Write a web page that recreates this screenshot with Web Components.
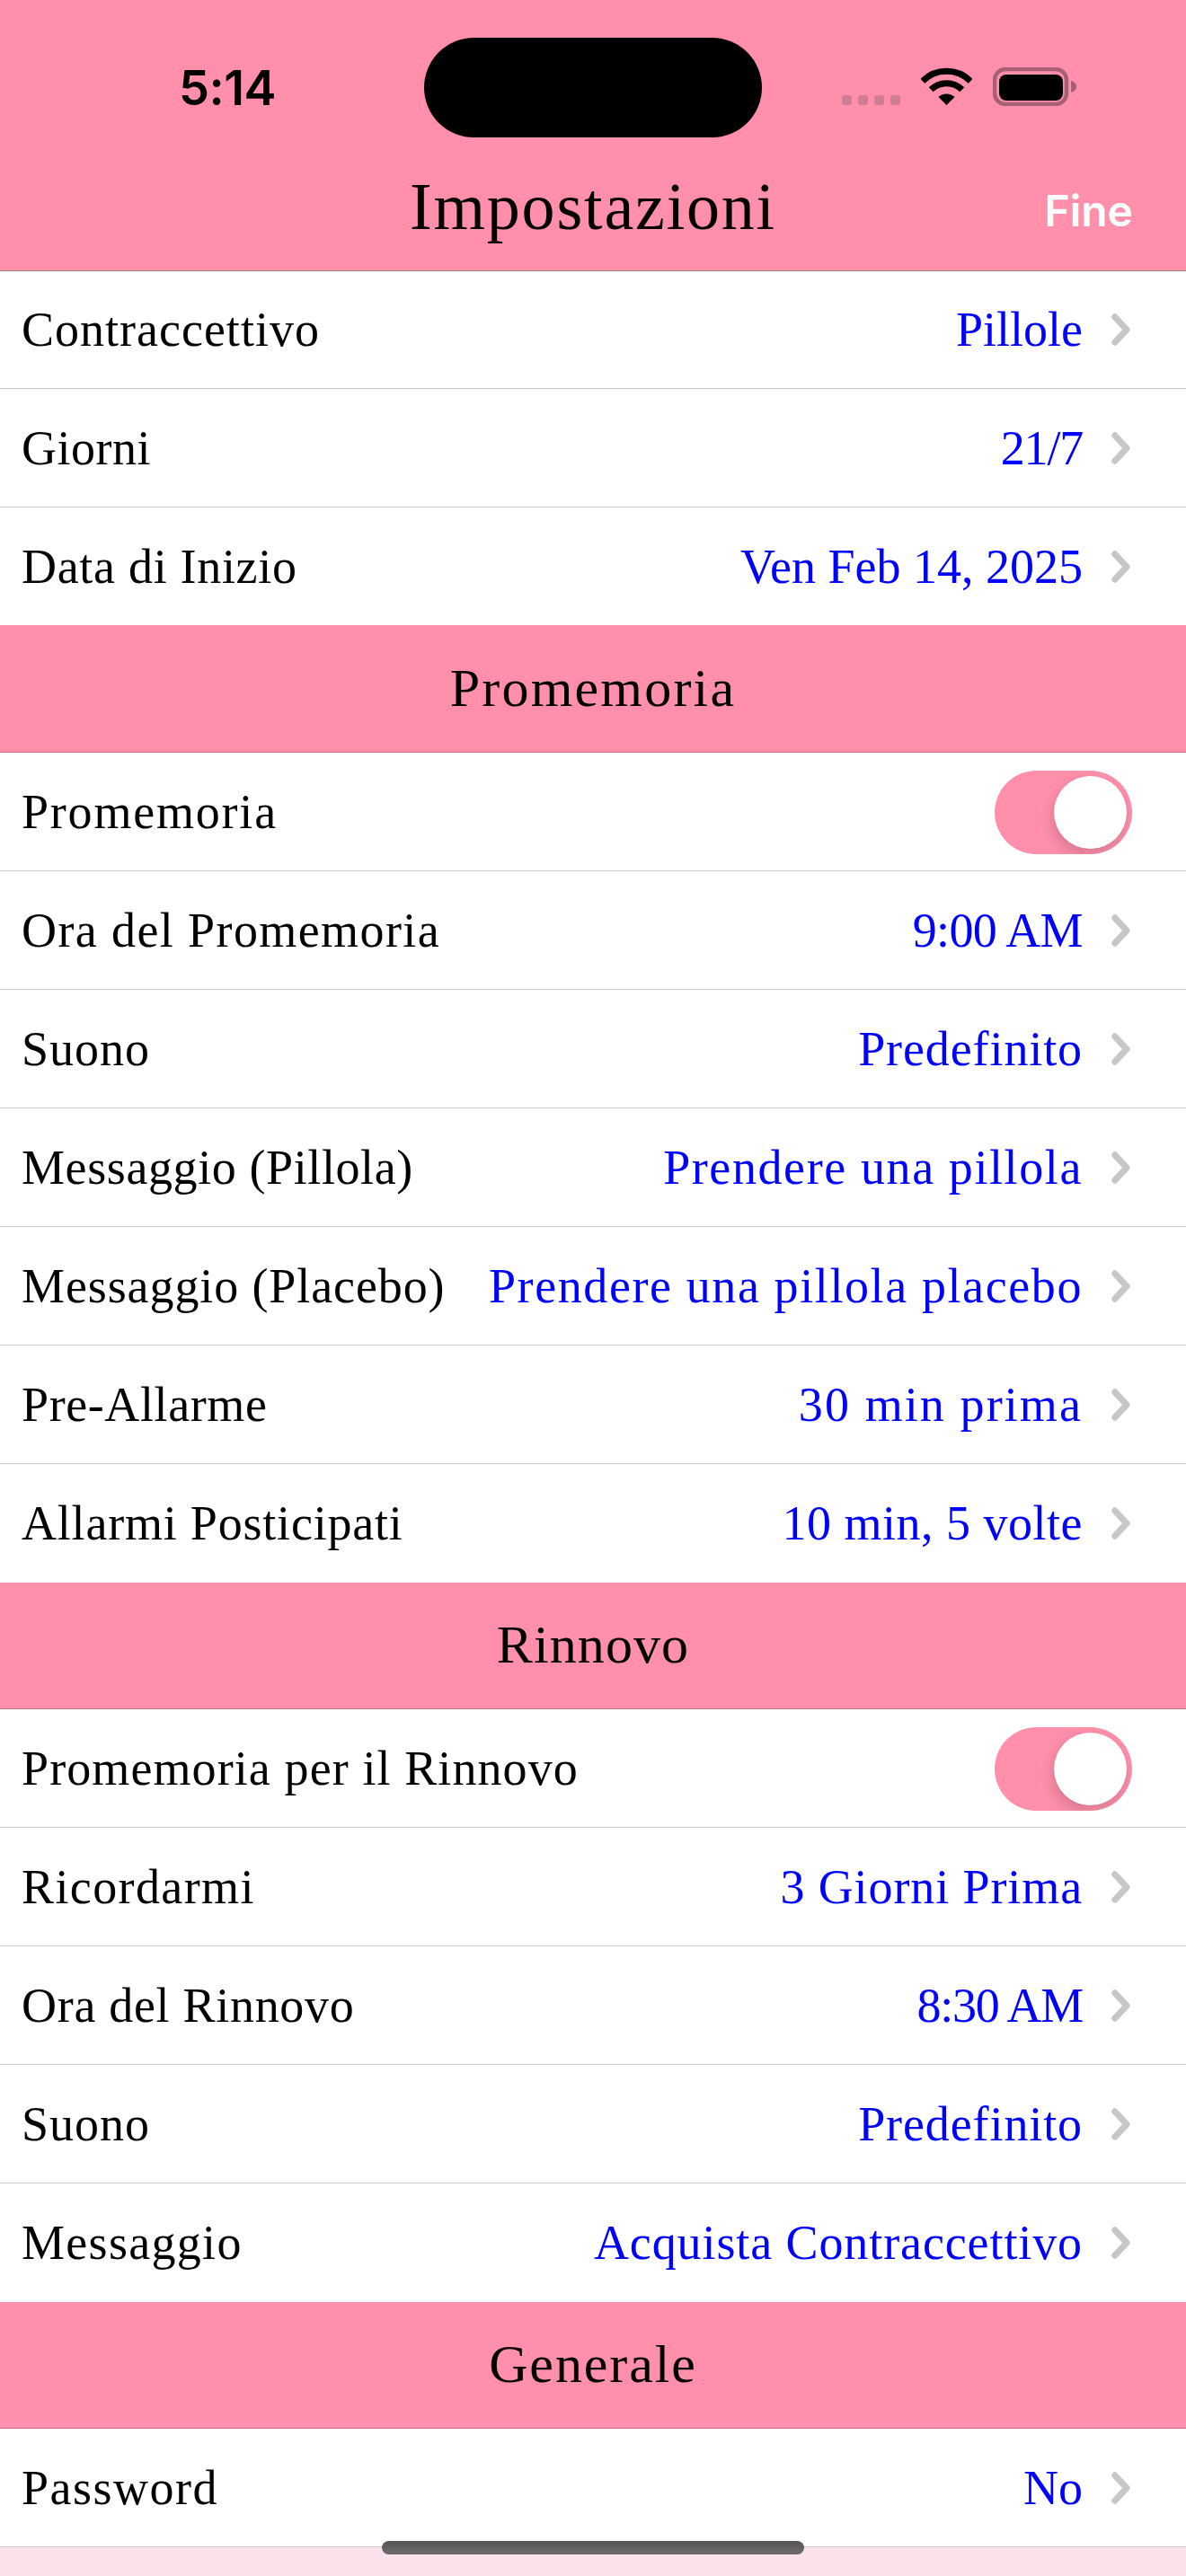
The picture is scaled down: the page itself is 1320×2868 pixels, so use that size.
<!DOCTYPE html>
<html lang="it"><head><meta charset="utf-8"><title>Impostazioni</title>
<style>
html,body{margin:0;padding:0;background:#fae1ec}
body{width:1320px;height:2868px;overflow:hidden;font-family:"Liberation Serif",serif;color:#000}
</style></head><body>
<settings-app>
  <status-bar></status-bar>
  <nav-bar>Impostazioni</nav-bar>
  <setting-row style="height:131px;--l:1px;--v:0px" value="Pillole">Contraccettivo</setting-row>
  <setting-row style="--l:.5px;--v:-1.2px" value="21/7">Giorni</setting-row>
  <setting-row style="height:131px;--l:.7px;--v:0px" value="Ven Feb 14, 2025" last>Data di Inizio</setting-row>
  <section-head style="height:142px;--s:2.2px">Promemoria</section-head>
  <setting-row style="--l:1.8px" toggle>Promemoria</setting-row>
  <setting-row style="--l:1.4px;--v:-.6px" value="9:00 AM">Ora del Promemoria</setting-row>
  <setting-row style="--l:1px;--v:.9px" value="Predefinito">Suono</setting-row>
  <setting-row style="--l:.6px;--v:1.6px" value="Prendere una pillola">Messaggio (Pillola)</setting-row>
  <setting-row style="--l:.9px;--v:1.6px" value="Prendere una pillola placebo">Messaggio (Placebo)</setting-row>
  <setting-row style="--l:.6px;--v:2.1px" value="30 min prima">Pre-Allarme</setting-row>
  <setting-row style="--l:.8px;--v:.5px" value="10 min, 5 volte" last>Allarmi Posticipati</setting-row>
  <section-head style="--s:1.1px">Rinnovo</section-head>
  <setting-row style="--l:1.1px" toggle>Promemoria per il Rinnovo</setting-row>
  <setting-row style="--l:1.4px;--v:.9px" value="3 Giorni Prima">Ricordarmi</setting-row>
  <setting-row style="--l:.7px;--v:-1.3px" value="8:30 AM">Ora del Rinnovo</setting-row>
  <setting-row style="--l:1px;--v:.9px" value="Predefinito">Suono</setting-row>
  <setting-row style="--l:1.3px;--v:.9px" value="Acquista Contraccettivo" last>Messaggio</setting-row>
  <section-head style="--s:1.9px">Generale</section-head>
  <setting-row style="--l:1.5px;--v:0px" value="No">Password</setting-row>
  <home-bar></home-bar>
</settings-app>
<script>
function def(name, css, html, init){
  customElements.define(name, class extends HTMLElement{
    constructor(){super();const r=this.attachShadow({mode:"open"});
      r.innerHTML="<style>"+css+"</style>"+html; if(init)init(this,r);}
  });
}
def("settings-app",":host{display:flex;flex-direction:column;width:1320px;height:2868px;position:relative;background:#fae1ec}","<slot></slot>");
def("status-bar",`:host{display:flex;align-items:flex-start;height:192px;box-sizing:border-box;background:#ff8fab;position:relative}
.time{margin:68px 0 0 199px;width:273px;font:600 54px/60px Inter,"Liberation Sans",sans-serif;letter-spacing:-.5px}
.island{margin-top:42px;width:376px;height:111px;border-radius:56px;background:#000}
.dots{display:flex;gap:7px;margin:106px 0 0 89px}
.dots i{width:11px;height:11px;border-radius:3px;background:#cf7c95}
svg{display:block;flex:none}
.wifi{margin:75px 0 0 23px}.bat{margin:75px 0 0 23px}`,
`<div class="time">5:14</div><div class="island"></div><div class="dots"><i></i><i></i><i></i><i></i></div>
<svg class="wifi" width="57" height="42" viewBox="0 0 57 42"><g fill="none" stroke="#000" stroke-width="7"><path d="M1.800 15.300A38 38 0 0 1 55.200 15.300"/><path d="M11.200 24.800A24.500 24.500 0 0 1 45.800 24.800"/></g><path d="M28.500 42L19.500 33A13 13 0 0 1 37.500 33Z"/></svg>
<svg class="bat" width="93" height="43" viewBox="0 0 93 43"><rect x="2" y="2" width="80" height="39" rx="12" fill="none" stroke="#a65f75" stroke-width="4.500"/><rect x="7" y="8" width="71" height="29" rx="8"/><path d="M87 15c4 1 6 3.500 6 6.500s-2 5.500-6 6.500z" fill="#a65f75"/></svg>`);
def("nav-bar",`:host{display:grid;grid-template-columns:1fr auto 1fr;align-items:center;height:110px;box-sizing:border-box;background:#ff8fab;border-bottom:1px solid #8f8f8f;padding-bottom:33px}
.t{grid-column:2;font:400 74px/60px "Liberation Serif",serif;letter-spacing:1.8px}
.d{justify-self:end;margin-right:59px;margin-top:9px;color:#fff;font:600 48px/56px Inter,"Liberation Sans",sans-serif}`,
`<div class="t"><slot></slot></div><div class="d">Fine</div>`);
def("section-head",`:host{display:flex;justify-content:center;align-items:center;height:141px;box-sizing:border-box;background:#ff8fab;border-bottom:1px solid #c97088;font:400 60px/64px "Liberation Serif",serif;letter-spacing:var(--s,0);padding-bottom:2px}`,"<slot></slot>");
def("setting-row",`:host{display:flex;align-items:center;height:132px;box-sizing:border-box;background:#fff;border-bottom:1px solid #c8c8c8;padding:0 62px 0 24px;font:400 54px/64px "Liberation Serif",serif}
:host([last]){border-bottom:none}
.l{flex:none;letter-spacing:var(--l,0)}.v{margin-left:auto;color:#00f;white-space:nowrap;letter-spacing:var(--v,0)}
svg{display:block;margin-left:32px;flex:none}
.sw{margin:2px -2px 0 auto;width:153px;height:93px;border-radius:47px;background:#ff8fab;position:relative;overflow:hidden}
.sw i{position:absolute;right:6px;top:6px;width:81px;height:81px;border-radius:50%;background:#fff;box-shadow:-2px 7px 16px rgba(0,0,0,.16),0 0 2px rgba(0,0,0,.06)}`,
`<div class="l"><slot></slot></div>`,
(h,r)=>{
  const a=document.createElement("template");
  if(h.hasAttribute("toggle")){a.innerHTML='<div class="sw"><i></i></div>';}
  else{a.innerHTML='<div class="v"></div><svg width="21" height="36" viewBox="0 0 21 36"><path d="M3.800 3.800L17 18L3.800 32.200" fill="none" stroke="#c7c7c9" stroke-width="7" stroke-linecap="round" stroke-linejoin="round"/></svg>';
    a.content.querySelector(".v").textContent=h.getAttribute("value");}
  r.appendChild(a.content);
});
def("home-bar",`:host{position:absolute;left:425px;top:2829px;width:470px;height:15px;border-radius:8px;background:linear-gradient(#555,#6f6a6f)}`,"");
</script>
</body></html>
